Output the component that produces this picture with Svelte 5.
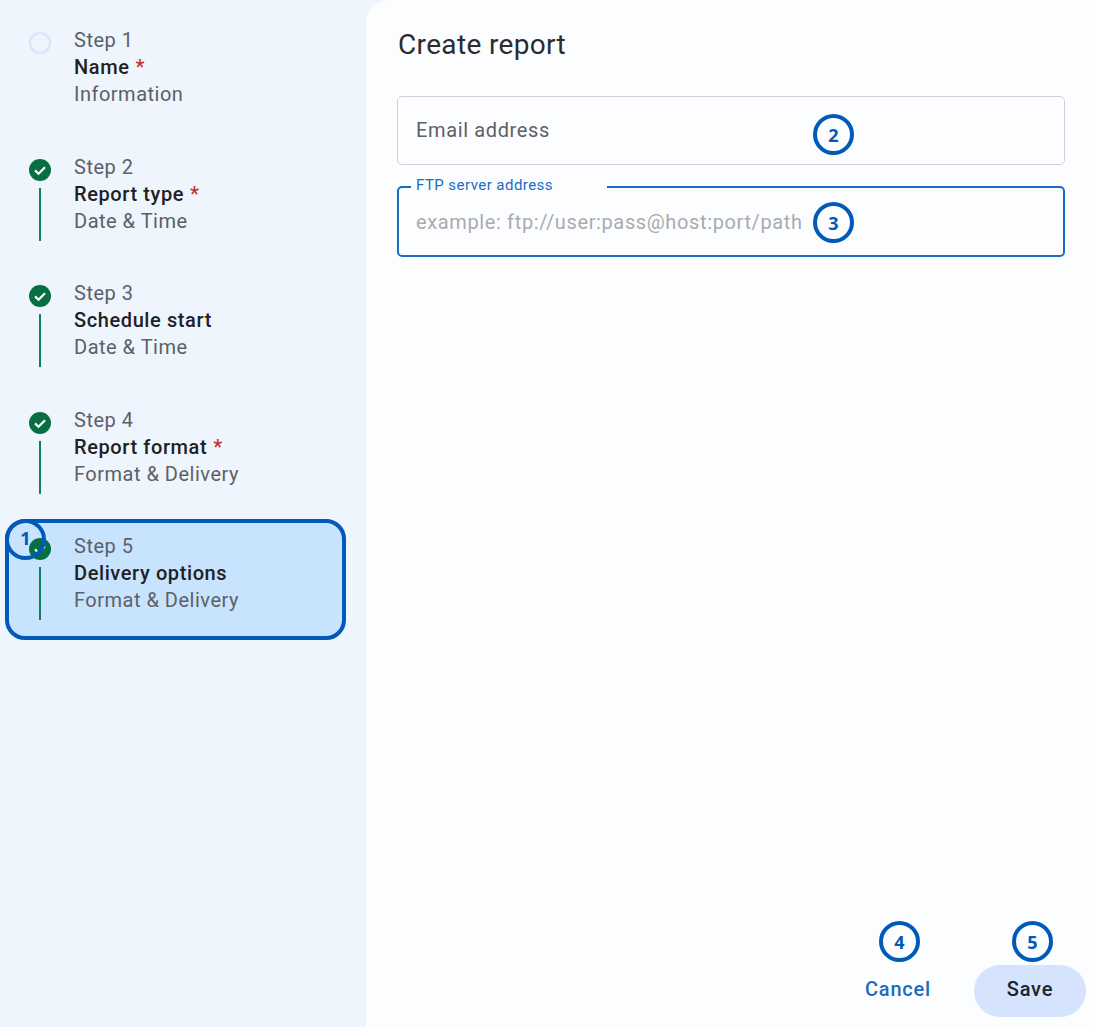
<script>
  const steps = [
    { n: 1, title: 'Name', sub: 'Information', req: true, done: false },
    { n: 2, title: 'Report type', sub: 'Date & Time', req: true, done: true },
    { n: 3, title: 'Schedule start', sub: 'Date & Time', req: false, done: true },
    { n: 4, title: 'Report format', sub: 'Format & Delivery', req: true, done: true },
    { n: 5, title: 'Delivery options', sub: 'Format & Delivery', req: false, done: true, active: true }
  ];
  const marks = [
    { n: 1, cls: 'm1' },
    { n: 2, cls: 'm2' },
    { n: 3, cls: 'm3' },
    { n: 4, cls: 'm4' },
    { n: 5, cls: 'm5' }
  ];
</script>

<div class="page">
  <aside class="side">
    {#each steps as s}
      <div class="step" class:active={s.active}>
        <div class="rail">
          {#if s.done}
            <svg class="check" viewBox="0 0 22 22" width="22" height="22" aria-hidden="true">
              <circle cx="11" cy="11" r="11" fill="#076f42" />
              <path d="M6 11.4l3.5 3.4L16 8.2" fill="none" stroke="#fff" stroke-width="2.2" />
            </svg>
            <span class="line"></span>
          {:else}
            <span class="ring"></span>
          {/if}
        </div>
        <div class="text">
          <div class="label">Step {s.n}</div>
          <div class="title">{s.title}{#if s.req}<span class="req">*</span>{/if}</div>
          <div class="label">{s.sub}</div>
        </div>
      </div>
    {/each}
  </aside>

  <main class="main">
    <h1>Create report</h1>
    <div class="fields">
      <input class="email" type="text" placeholder="Email address" aria-label="Email address" />
      <fieldset class="ftp">
        <legend>FTP server address</legend>
        <input type="text" placeholder="example: ftp://user:pass@host:port/path" aria-label="FTP server address" />
      </fieldset>
    </div>
    <div class="actions">
      <button class="cancel" type="button">Cancel</button>
      <button class="save" type="button">Save</button>
    </div>
  </main>

  {#each marks as m}
    <span class="mark {m.cls}">{m.n}</span>
  {/each}
</div>

<style>
  :global(body) {
    margin: 0;
    background: #eef5fd;
  }
  .page {
    position: relative;
    display: flex;
    height: 1027px;
    width: 1094px;
    overflow: hidden;
    background: #eef5fd;
    font-family: Roboto, "Liberation Sans", sans-serif;
    font-size: 20px;
    color: #5d6068;
  }
  .side {
    width: 366px;
    flex: none;
    box-sizing: border-box;
    padding: 13px 20px 0 5px;
    display: flex;
    flex-direction: column;
    gap: 5.5px;
  }
  .step {
    box-sizing: border-box;
    height: 121px;
    border: 4px solid transparent;
    border-radius: 20px;
    display: flex;
    gap: 23px;
    padding: 10px 0 0 20px;
  }
  .step.active {
    background: #c8e3fe;
    border-color: #0159b8;
  }
  .rail {
    width: 22px;
    flex: none;
    display: flex;
    flex-direction: column;
    align-items: center;
    padding-top: 5px;
  }
  .check {
    display: block;
    flex: none;
  }
  .line {
    width: 2.5px;
    height: 53px;
    margin-top: 7px;
    background: #12805a;
  }
  .ring {
    box-sizing: border-box;
    width: 22px;
    height: 22px;
    border: 2px solid #d5e6f9;
    border-radius: 50%;
  }
  .text {
    line-height: 27px;
    letter-spacing: 0.5px;
  }
  .title {
    font-weight: 500;
    color: #1f2125;
    letter-spacing: 0.6px;
  }
  .req {
    margin-left: 6px;
    color: #c5322c;
  }
  .main {
    flex: 1;
    box-sizing: border-box;
    display: flex;
    flex-direction: column;
    padding: 0 29px 10px 31px;
    background: #fcfdff;
    border-top-left-radius: 22px;
  }
  h1 {
    margin: 27px 0 0 1px;
    font-size: 28px;
    line-height: 36px;
    font-weight: 400;
    color: #2a2c30;
    letter-spacing: 0.35px;
  }
  .fields {
    display: flex;
    flex-direction: column;
    gap: 13px;
    margin-top: 33px;
  }
  input {
    font: inherit;
    color: inherit;
    outline: none;
    border: none;
    background: transparent;
    letter-spacing: 0.63px;
  }
  .email {
    box-sizing: border-box;
    height: 69px;
    width: 100%;
    padding: 0 18px 1px;
    border: 1.5px solid #cfd0d3;
    border-radius: 5px;
  }
  .email::placeholder {
    color: #5d6068;
    opacity: 1;
  }
  .ftp {
    box-sizing: border-box;
    height: 79px;
    margin: 0;
    padding: 0 17px;
    border: 2px solid #1a6cc0;
    border-radius: 5px;
    position: relative;
  }
  legend {
    box-sizing: border-box;
    width: 196px;
    margin-left: -5px;
    padding: 0 5px 4px;
    font-size: 15px;
    line-height: 14px;
    color: #1a6cc0;
    letter-spacing: 0.45px;
  }
  .ftp input {
    display: block;
    width: 100%;
    height: 50px;
    padding: 0;
    margin-top: 1px;
  }
  .ftp input::placeholder {
    color: #a9abae;
    opacity: 1;
  }
  .actions {
    margin-top: auto;
    display: flex;
    justify-content: flex-end;
    align-items: center;
    margin-right: -21px;
    gap: 20px;
  }
  button {
    font: inherit;
    font-weight: 500;
    border: none;
    background: none;
    height: 52px;
    border-radius: 26px;
    cursor: pointer;
    letter-spacing: 0.8px;
    padding: 0 0 4px;
  }
  .cancel {
    width: 112px;
    color: #1a6cc0;
  }
  .save {
    width: 112px;
    background: #d5e3fc;
    color: #1b2230;
  }
  .mark {
    position: absolute;
    box-sizing: border-box;
    width: 41px;
    height: 41px;
    border: 4px solid #0159b8;
    border-radius: 50%;
    display: flex;
    align-items: center;
    justify-content: center;
    font-family: "Open Sans", sans-serif;
    font-weight: 700;
    font-size: 18px;
    color: #0159b8;
  }
  .m1 { left: 5px; top: 519px; padding-bottom: 4px; }
  .m2 { left: 813px; top: 114px; }
  .m3 { left: 813px; top: 202px; }
  .m4 { left: 879px; top: 921px; }
  .m5 { left: 1012px; top: 921px; }
</style>
